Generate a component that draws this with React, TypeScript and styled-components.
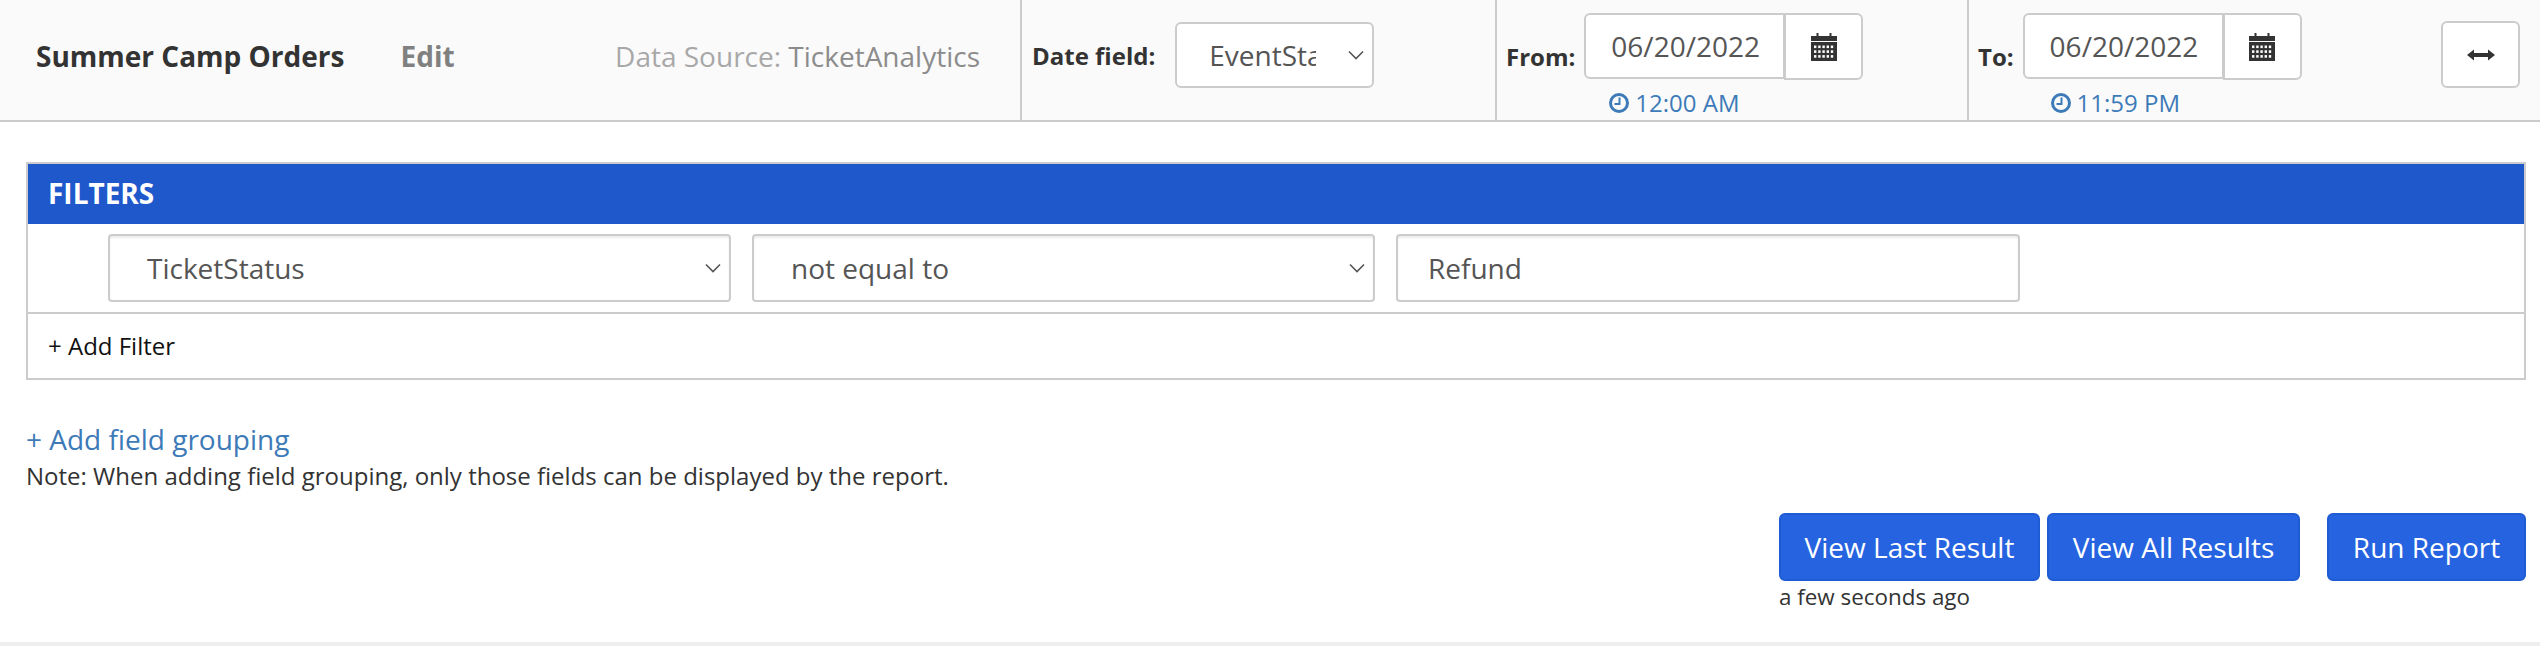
import React from 'react';
import styled, { createGlobalStyle } from 'styled-components';

const GlobalStyle = createGlobalStyle`
  html, body {
    margin: 0;
    padding: 0;
    background: #fff;
  }
  body {
    font-family: 'Open Sans', 'Noto Sans', sans-serif;
    color: #333;
  }
`;

const Page = styled.div`
  width: 2540px;
  height: 646px;
  display: flex;
  flex-direction: column;
  overflow: hidden;
  border-bottom: 4px solid #eeeeee;
  box-sizing: border-box;
`;

const Toolbar = styled.header`
  display: flex;
  height: 122px;
  flex-shrink: 0;
  box-sizing: border-box;
  background: #fafafa;
  border-bottom: 2px solid #cccccc;
`;

const TitleSection = styled.div`
  width: 1022px;
  box-sizing: border-box;
  padding: 0 40px 8px 36px;
  display: flex;
  align-items: center;
  border-right: 2px solid #cccccc;
`;

const Title = styled.h1`
  margin: 0;
  font-size: 28px;
  font-weight: 700;
  color: #333;
`;

const EditLink = styled.a`
  margin-left: 56px;
  font-size: 28px;
  font-weight: 700;
  color: #808080;
`;

const DataSource = styled.span`
  margin-left: auto;
  font-size: 28px;
  color: #a8a8a8;
`;

const DataSourceName = styled.span`
  color: #8c8c8c;
`;

const DateFieldSection = styled.div`
  width: 475px;
  box-sizing: border-box;
  padding: 0 0 10px 10px;
  display: flex;
  align-items: center;
  gap: 20px;
  border-right: 2px solid #cccccc;
`;

const FieldLabel = styled.label`
  font-size: 24px;
  font-weight: 700;
  color: #333;
`;

const RangeSection = styled.div<{ $width: number; $divider?: boolean }>`
  width: ${({ $width }) => $width}px;
  box-sizing: border-box;
  padding: 13px 0 0 9px;
  display: flex;
  align-items: flex-start;
  gap: 9px;
  border-right: ${({ $divider }) => ($divider ? '2px solid #cccccc' : 'none')};
`;

const RangeLabel = styled(FieldLabel)`
  margin-top: 27px;
`;

const RangeBody = styled.div`
  display: flex;
  flex-direction: column;
`;

const DateGroup = styled.div`
  display: flex;
`;

const DateInput = styled.div`
  width: 201px;
  height: 66px;
  box-sizing: border-box;
  display: flex;
  align-items: center;
  padding-left: 25px;
  background: #fff;
  border: 2px solid #cccccc;
  border-radius: 6px 0 0 6px;
  font-size: 28px;
  color: #555;
`;

const CalendarButton = styled.button`
  width: 79px;
  height: 67px;
  box-sizing: border-box;
  margin: 0 0 0 -1px;
  padding: 0;
  display: flex;
  align-items: center;
  justify-content: center;
  background: #fff;
  border: 2px solid #cccccc;
  border-radius: 0 6px 6px 0;
  color: #333;
`;

const TimeLink = styled.a<{ $indent: number }>`
  margin: 7px 0 0 ${({ $indent }) => $indent}px;
  display: flex;
  align-items: center;
  gap: 6px;
  font-size: 24px;
  line-height: 32px;
  color: #3d7ab8;
`;

const ExpandSection = styled.div`
  flex: 1;
  display: flex;
  align-items: flex-start;
  justify-content: flex-end;
  padding: 21px 20px 0 0;
`;

const ExpandButton = styled.button`
  width: 79px;
  height: 67px;
  padding: 0;
  box-sizing: border-box;
  display: flex;
  align-items: center;
  justify-content: center;
  background: #fff;
  border: 2px solid #cccccc;
  border-radius: 6px;
  color: #333;
`;

const Content = styled.main`
  flex: 1;
  display: flex;
  flex-direction: column;
  padding: 40px 14px 0 26px;
`;

const FilterPanel = styled.section`
  border: 2px solid #cccccc;
`;

const PanelHeader = styled.div`
  height: 60px;
  box-sizing: border-box;
  padding: 0 0 2px 20px;
  display: flex;
  align-items: center;
  background: #1e58cb;
  color: #fff;
  font-size: 28px;
  font-weight: 700;
`;

const FilterRow = styled.div`
  height: 90px;
  box-sizing: border-box;
  padding: 10px 0 0 80px;
  display: flex;
  gap: 21px;
  border-bottom: 2px solid #cccccc;
`;

const FieldBox = styled.div<{ $width: number }>`
  position: relative;
  width: ${({ $width }) => $width}px;
  height: 68px;
  box-sizing: border-box;
  display: flex;
  align-items: center;
  background: #fff;
  border: 2px solid #cccccc;
  border-radius: 4px;
  box-shadow: inset 0 2px 2px rgba(0, 0, 0, 0.075);
  font-size: 28px;
  color: #555;
`;

const SelectText = styled.span`
  padding-left: 37px;
`;

const InputText = styled.span`
  padding-left: 30px;
`;

const DateFieldBox = styled(FieldBox)`
  height: 66px;
  box-shadow: none;
  border-radius: 6px;
`;

const ClippedText = styled.span`
  margin-left: 32px;
  width: 107px;
  overflow: hidden;
  white-space: nowrap;
`;

const Chevron = styled.svg`
  position: absolute;
  right: 7px;
  top: 50%;
  width: 18px;
  height: 10px;
  margin-top: -5px;
  color: #555;
`;

const AddFilterRow = styled.div`
  height: 64px;
  box-sizing: border-box;
  padding: 0 0 2px 20px;
  display: flex;
  align-items: center;
  font-size: 24px;
  color: #111;
`;

const GroupingLink = styled.a`
  margin-top: 41px;
  font-size: 28px;
  line-height: 36px;
  color: #3d7ab8;
`;

const Note = styled.p`
  margin: 1px 0 0;
  font-size: 24px;
  line-height: 36px;
  color: #333;
`;

const ActionArea = styled.div`
  margin-top: 19px;
  display: flex;
  justify-content: flex-end;
  gap: 27px;
`;

const ResultGroup = styled.div`
  display: flex;
  flex-direction: column;
`;

const ResultButtons = styled.div`
  display: flex;
  gap: 7px;
`;

const ActionButton = styled.button<{ $width: number }>`
  width: ${({ $width }) => $width}px;
  height: 68px;
  padding: 0;
  box-sizing: border-box;
  background: #2563e0;
  border: 2px solid #1f5cd4;
  border-radius: 6px;
  color: #fff;
  font-family: inherit;
  font-size: 28px;
`;

const Timestamp = styled.span`
  font-size: 22.4px;
  line-height: 32px;
  color: #333;
`;

const ChevronIcon = () => (
  <Chevron viewBox="0 0 18 10" fill="none" stroke="currentColor" strokeWidth="1.6">
    <path d="M2 1.5 L9 8.5 L16 1.5" />
  </Chevron>
);

const CalendarIcon = () => {
  const dots: React.ReactNode[] = [];
  for (let row = 0; row < 3; row++) {
    for (let col = 0; col < 5; col++) {
      dots.push(<rect key={`${row}-${col}`} x={3 + col * 4.2} y={12.5 + row * 4.8} width="2.4" height="2.6" fill="#fff" />);
    }
  }
  return (
    <svg width="26" height="28" viewBox="0 0 26 28" fill="currentColor">
      <path d="M5.5 0h2v3h-2zM18.5 0h2v3h-2z" />
      <path d="M0 3h26v5H0z" />
      <path d="M0 9h26v19H0z" />
      {dots}
    </svg>
  );
};

const ClockIcon = () => (
  <svg width="20" height="20" viewBox="0 0 20 20" fill="none" stroke="currentColor">
    <circle cx="10" cy="10" r="8.5" strokeWidth="3" />
    <path d="M10.5 4.5 V11 H5.5" strokeWidth="2" />
  </svg>
);

const ExpandIcon = () => (
  <svg width="28" height="14" viewBox="0 0 28 14" fill="currentColor">
    <path d="M0 7 L7 1.5 V5 H21 V1.5 L28 7 L21 12.5 V9 H7 V12.5 Z" />
  </svg>
);

interface DateRangeProps {
  label: string;
  date: string;
  time: string;
  width: number;
  indent: number;
  divider?: boolean;
}

const DateRange: React.FC<DateRangeProps> = ({ label, date, time, width, indent, divider }) => (
  <RangeSection $width={width} $divider={divider}>
    <RangeLabel>{label}</RangeLabel>
    <RangeBody>
      <DateGroup>
        <DateInput>{date}</DateInput>
        <CalendarButton>
          <CalendarIcon />
        </CalendarButton>
      </DateGroup>
      <TimeLink $indent={indent}>
        <ClockIcon />
        {time}
      </TimeLink>
    </RangeBody>
  </RangeSection>
);

export default function App() {
  return (
    <Page>
      <GlobalStyle />
      <Toolbar>
        <TitleSection>
          <Title>Summer Camp Orders</Title>
          <EditLink>Edit</EditLink>
          <DataSource>
            Data Source: <DataSourceName>TicketAnalytics</DataSourceName>
          </DataSource>
        </TitleSection>
        <DateFieldSection>
          <FieldLabel>Date field:</FieldLabel>
          <DateFieldBox $width={199}>
            <ClippedText>EventStartDate</ClippedText>
            <ChevronIcon />
          </DateFieldBox>
        </DateFieldSection>
        <DateRange label="From:" date="06/20/2022" time="12:00 AM" width={472} indent={25} divider />
        <DateRange label="To:" date="06/20/2022" time="11:59 PM" width={420} indent={28} />
        <ExpandSection>
          <ExpandButton>
            <ExpandIcon />
          </ExpandButton>
        </ExpandSection>
      </Toolbar>
      <Content>
        <FilterPanel>
          <PanelHeader>FILTERS</PanelHeader>
          <FilterRow>
            <FieldBox $width={623}>
              <SelectText>TicketStatus</SelectText>
              <ChevronIcon />
            </FieldBox>
            <FieldBox $width={623}>
              <SelectText>not equal to</SelectText>
              <ChevronIcon />
            </FieldBox>
            <FieldBox $width={624}>
              <InputText>Refund</InputText>
            </FieldBox>
          </FilterRow>
          <AddFilterRow>+ Add Filter</AddFilterRow>
        </FilterPanel>
        <GroupingLink>+ Add field grouping</GroupingLink>
        <Note>Note: When adding field grouping, only those fields can be displayed by the report.</Note>
        <ActionArea>
          <ResultGroup>
            <ResultButtons>
              <ActionButton $width={261}>View Last Result</ActionButton>
              <ActionButton $width={253}>View All Results</ActionButton>
            </ResultButtons>
            <Timestamp>a few seconds ago</Timestamp>
          </ResultGroup>
          <ActionButton $width={199}>Run Report</ActionButton>
        </ActionArea>
      </Content>
    </Page>
  );
}
